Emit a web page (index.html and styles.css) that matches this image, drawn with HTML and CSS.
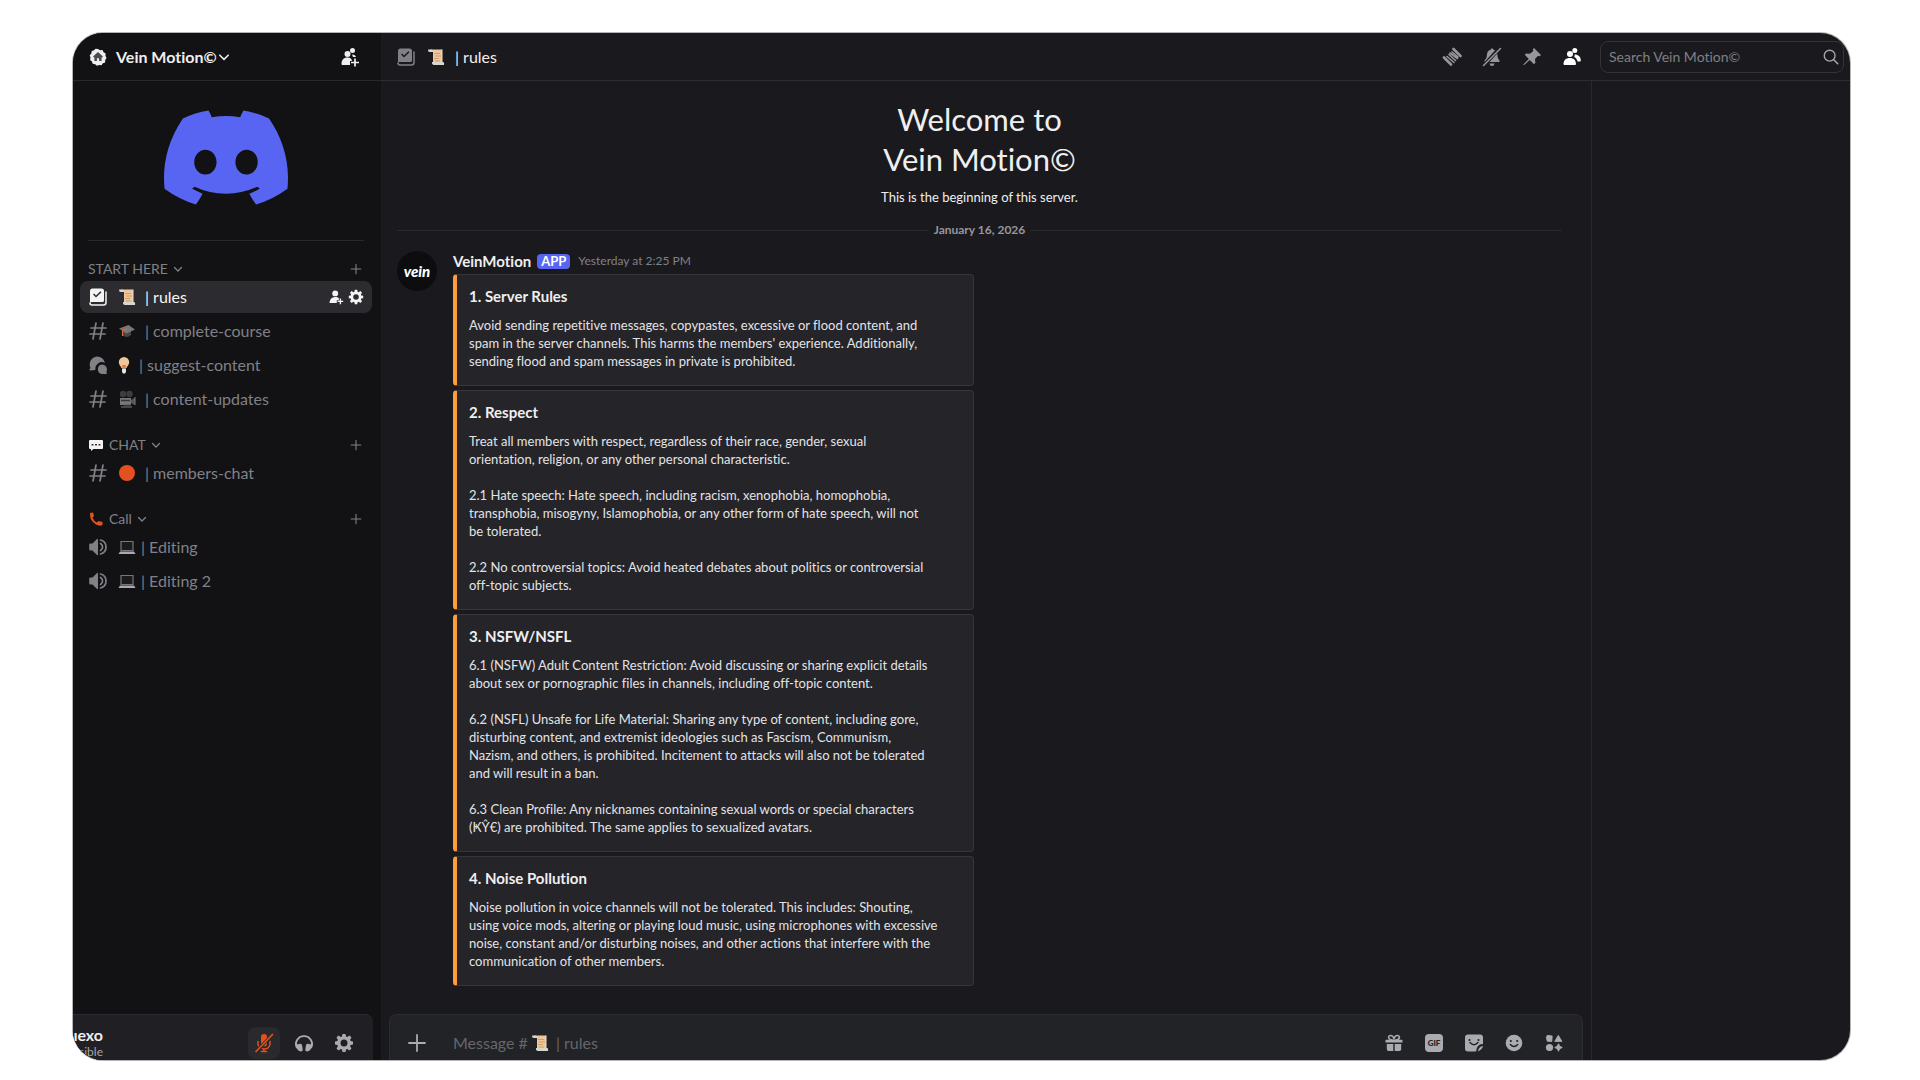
FILE: index.html
```html
<!DOCTYPE html>
<html lang="en">
<head>
<meta charset="utf-8">
<title>Vein Motion© | rules</title>
<link rel="stylesheet" href="styles.css">
</head>
<body>
<svg class="sprite" aria-hidden="true">
  <symbol id="hash" viewBox="0 0 20 20"><path d="M8 2 5 18M15 2l-3 16M3 7h15M2 13h15" fill="none" stroke="currentColor" stroke-width="1.7" stroke-linecap="round"/></symbol>
  <symbol id="chevron" viewBox="0 0 10 10"><path d="m1.500 3.500 3.500 3.500 3.500-3.500" fill="none" stroke="currentColor" stroke-width="1.300" stroke-linecap="round"/></symbol>
  <symbol id="plus" viewBox="0 0 20 20"><path d="M10 2v16M2 10h16" fill="none" stroke="currentColor" stroke-width="1.800" stroke-linecap="round"/></symbol>
  <symbol id="rulesicon" viewBox="0 0 20 20"><path fill="currentColor" fill-rule="evenodd" d="M4 1.500h9.500A2.500 2.500 0 0 1 16 4v9.500A1.500 1.500 0 0 1 14.500 15H4a2 2 0 0 0-2 .8V4a2.500 2.500 0 0 1 2-2.500ZM5 7.600l3 3 5.500-5.300-1.100-1.100L8 8.400 6.100 6.500Z"/><path fill="none" stroke="currentColor" stroke-width="1.500" stroke-linecap="round" d="M18 5v10.500a2.500 2.500 0 0 1-2.500 2.500H4a2 2 0 0 1-2-2"/></symbol>
  <symbol id="scroll" viewBox="0 0 18 18"><path fill="#edc69b" d="M3.500 1.500H15v12.500H6V4H3.500Z"/><path fill="#d9d5cf" d="M1 1.500h3.500q1.500 0 1.500 2.500H2.500Q1 4 1 1.500ZM5 14h11q1.500 0 1 3H6.500Q4.500 16.500 5 14Z"/><path stroke="#d29d68" stroke-width="1" d="M7 5.500h6M8 8h6M7 10.500h5M8 13h5"/><path d="M15 1.500V14" stroke="#e5ddd2"/></symbol>
  <symbol id="cap" viewBox="0 0 18 18"><path fill="#45464a" d="M4.500 8v5.500q4.500 3 8.500-.5V8Z"/><path fill="#77777b" d="M1 6.500 10.500 3 17 7.500 8.500 11.500Z"/><path d="m9 7-4.500 2v5" fill="none" stroke="#dd6838" stroke-width="1.200"/></symbol>
  <symbol id="threads" viewBox="0 0 20 20"><path fill="currentColor" d="M9 1.500a8 8 0 0 1 8 6.500A6.500 6.500 0 0 0 7.500 15L2 15.500q-1 0-.5-1l1-1.500A8 8 0 0 1 9 1.500Z"/><path fill="currentColor" d="M14 9.500a5 5 0 0 1 4.300 7.500l.7 1q.3 1-1 1H14a4.800 4.800 0 0 1 0-9.500Z"/></symbol>
  <symbol id="bulb" viewBox="0 0 12 18"><path fill="#edc69b" d="M6 1a5.200 5.200 0 0 1 5.200 5.200C11.200 9 9 10 8.500 12h-5C3 10 .8 9 .8 6.200A5.200 5.200 0 0 1 6 1Z"/><path fill="#ef7c2c" d="M4 9h4l-.5 3.500h-3Z"/><path fill="#e5e5e6" d="M4 12.500h4V16l-1 1.500H5L4 16Z"/></symbol>
  <symbol id="camera" viewBox="0 0 18 18"><circle cx="5" cy="4" r="3.200" fill="#3c3c42"/><circle cx="11.500" cy="4" r="3.200" fill="#3c3c42"/><path fill="#77767d" d="M2 8h11v7H2Z"/><path fill="#55545b" d="m13 10 4-2.500v7.500l-4-2Z"/><path stroke="#35353a" d="M3 10.500h9M6 15.500h7" stroke-width="1.500"/><path stroke="#77767d" d="M3 17h11M17 7v8"/></symbol>
  <symbol id="laptop" viewBox="0 0 18 18"><path fill="#1b1b1e" stroke="#77767c" stroke-width="1.200" d="M3 3.500h12v9H3Z"/><path fill="#aaa9b0" d="M2 13.500h14l1.500 2.500H.5Z"/></symbol>
  <symbol id="speaker" viewBox="0 0 20 20"><path fill="currentColor" d="M10 2.500v15q0 1-1 .5L4.500 13.500H2.500q-1.300 0-1.300-1.300V7.800q0-1.300 1.300-1.300h2L9 2q1-.5 1 .5Z"/><path d="M12.500 6.500a4 4 0 0 1 0 7M12.500 3a7.200 7.200 0 0 1 0 14" fill="none" stroke="currentColor" stroke-width="1.700" stroke-linecap="round"/></symbol>
  <symbol id="bubble" viewBox="0 0 16 16"><path fill="#f2f2f3" d="M2 3h12q1 0 1 1v7q0 1-1 1H5.500L3 14v-2H2q-1 0-1-1V4q0-1 1-1Z"/><path fill="#333" d="M3.500 7h2v1.500h-2Zm3.500 0h2v1.500H7Zm3.500 0h2v1.500h-2Z"/></symbol>
  <symbol id="phone" viewBox="0 0 16 16"><path fill="#e2511f" d="M2 2 5 1.500 6 5 4.500 6.500q1 3.500 4.500 5L10.500 10l4 1v3q-3 1.500-6.500-.5Q1.500 9.500 2 2Z"/></symbol>
  <symbol id="gear" viewBox="0 0 20 20"><path fill="currentColor" fill-rule="evenodd" d="M8.500 1h3l.5 2.400 1.300.6 2.200-1.400 2 2L16.100 6.800l.5 1.300L19 8.500v3l-2.400.4-.5 1.300 1.400 2.200-2 2-2.200-1.400-1.300.6-.5 2.400h-3L8 16.600 6.700 16l-2.200 1.400-2-2 1.400-2.200-.5-1.300L1 11.500v-3l2.400-.4.5-1.300-1.400-2.200 2-2L6.700 4 8 3.400ZM10 6.500a3.500 3.500 0 1 0 0 7 3.500 3.500 0 0 0 0-7Z"/></symbol>
  <symbol id="adduser" viewBox="0 0 20 20"><circle cx="9" cy="5.500" r="3.700" fill="currentColor"/><path fill="currentColor" d="M2 17.500c0-4 2.500-7.500 7-7.500 2 0 3.500.6 4.600 1.700V14H11v3.500Z"/><path d="M15.500 12v7M12 15.500h7" stroke="currentColor" stroke-width="1.700"/></symbol>
  <symbol id="invite" viewBox="0 0 20 20"><circle cx="7.500" cy="7" r="3" fill="currentColor"/><circle cx="12.500" cy="3.500" r="2.500" fill="currentColor"/><path fill="currentColor" d="M1.500 17c0-4 2-6.500 6-6.500 1.500 0 2.700.4 3.700 1.200L12 14h-2v4H2.500q-1 0-1-1ZM12 7.500c2 0 3.500.8 4 2.500h-3Z"/><path d="M15 11.500v8M11 15.500h8" stroke="currentColor" stroke-width="1.700"/></symbol>
  <symbol id="members" viewBox="0 0 20 20"><circle cx="8" cy="7" r="3" fill="currentColor"/><circle cx="12.800" cy="3.500" r="2.500" fill="currentColor"/><path fill="currentColor" d="M1.500 17c.2-4 2.500-6 6.300-6s6 2 6.200 6q0 1-1 1H2.500q-1 0-1-1ZM12.500 7.500c4 0 6.300 2.500 6.300 6q0 1-1 1h-2.200c-.4-2-1.500-3.600-3.400-4.600q.8-1.200.3-2.400Z"/></symbol>
  <symbol id="home" viewBox="0 0 20 20"><path fill="currentColor" d="m10 1 2.300 1.400 2.700-.2 1.200 2.400L18.500 6l-.2 2.700L19.500 11l-1.500 2.300-.1 2.700-2.500 1-1.500 2.200-2.600-.3-2.500.8-2-1.600-2.700-.5-.8-2.500L1.200 13.300 1.600 10.500.8 8l1.800-2L3 3.400l2.600-.8L7.300.9Z"/><path fill="#4b4b51" d="m10 4.500 5.500 5-1 1H14v4h-2.800v-3.200H8.800v3.200H6v-4h-.5l-1-1Z"/></symbol>
  <symbol id="thread" viewBox="0 0 20 20"><g fill="none" stroke="currentColor" stroke-linecap="round"><path d="m2 10.500 7 7M11.500 2l7 7" stroke-width="2.600"/><path d="m5 9.500 7 6M7 7.500l6.500 6M8 6l7.500 5.500M10 5l6 5" stroke-width="1.600"/></g></symbol>
  <symbol id="bell" viewBox="0 0 20 20"><path fill="currentColor" d="M10 1.500q1.300 0 1.500 1.200l1.700.6L3 14.500q-1 0-.5-1 2.500-2 2.500-6 0-3.500 3.500-4.800Q8.700 1.500 10 1.500ZM15.300 6.500q0 5 2.200 7 .5 1.500-.8 1.500H7.500ZM7.500 16.500h5q-.3 2.500-2.500 2.500t-2.500-2.500Z"/><path d="M18.500 1.500 1.500 18.500" stroke="currentColor" stroke-width="1.500" stroke-linecap="round"/></symbol>
  <symbol id="pin" viewBox="0 0 20 20"><path fill="currentColor" d="m12 1 7 7-1.300 1.200-1.700-.4-3 3.200.4 3.800-1.400 1.400-4.300-4.300L2.200 18H1.500v-.8l5.300-5.300-4-4.200L4 6.500l4 .3L11.300 4l-.5-1.800Z"/></symbol>
  <symbol id="search" viewBox="0 0 20 20"><circle cx="8.500" cy="8.500" r="6" fill="none" stroke="currentColor" stroke-width="1.500"/><path d="m13 13 4.500 4.500" stroke="currentColor" stroke-width="1.700" stroke-linecap="round"/></symbol>
  <symbol id="mute" viewBox="0 0 20 20"><path fill="currentColor" d="M10 1q3 0 3 3v1L7 11V4q0-3 3-3ZM13 9.500v1a3 3 0 0 1-3 3l-.8-.1Z"/><path fill="none" stroke="currentColor" stroke-width="1.500" stroke-linecap="round" d="M4 8.500V11q0 1 .4 1.800M16 8.500V11q-.6 5-6 5l-1.500-.2M10 16v2.500M7.500 18.500h5"/><path d="M18.500 1.500 2 18.500" stroke="currentColor" stroke-width="1.700" stroke-linecap="round"/></symbol>
  <symbol id="headset" viewBox="0 0 20 20"><path fill="none" stroke="currentColor" stroke-width="1.900" d="M3 15A8 8 0 1 1 17 15"/><path fill="currentColor" d="M5 11q2-1 3 1l.7 4.500q.3 2-1.700 2-4 0-5-6.500Q3 11 5 11ZM15 11q-2-1-3 1l-.7 4.500q-.3 2 1.700 2 4 0 5-6.500-1-1-3-1Z"/></symbol>
  <symbol id="gift" viewBox="0 0 20 20"><path fill="currentColor" d="M1.500 6.500h17q1 0 1 1v2H.5v-2q0-1 1-1ZM2 11h7.200v8H4q-2 0-2-2Zm8.800 0H18v6q0 2-2 2h-5.200Z"/><path fill="none" stroke="currentColor" stroke-width="1.800" d="M10 7C7 7 4 6 4 3.700 4 .8 9 .5 10 5.500 11 .5 16 .8 16 3.700 16 6 13 7 10 7Z"/></symbol>
  <symbol id="sticker" viewBox="0 0 20 20"><path fill="currentColor" d="M4 1.500h12q3 0 3 3V11q-6-.5-7 7.500H4q-3 0-3-3v-11q0-3 3-3ZM19 13q-.5 3-5 5.500.500-5 5-5.500Z"/><g fill="#222327"><circle cx="5.500" cy="7" r="1.100"/><circle cx="14.500" cy="7" r="1.100"/></g><path d="M6 9.500q4 4.500 8 0" fill="none" stroke="#222327" stroke-width="1.400" stroke-linecap="round"/></symbol>
  <symbol id="smile" viewBox="0 0 20 20"><circle cx="10" cy="10" r="8.300" fill="currentColor"/><g fill="#222327"><circle cx="6.800" cy="8" r="1.100"/><circle cx="13.200" cy="8" r="1.100"/></g><path d="M6.300 11.500q3.700 4 7.400 0" fill="none" stroke="#222327" stroke-width="1.400" stroke-linecap="round"/></symbol>
  <symbol id="apps" viewBox="0 0 20 20"><path fill="currentColor" stroke="currentColor" stroke-linejoin="round" d="m2.500 1.500 5.500.8-.5 6L2.500 8 1.500 4ZM14.800 1.500 18.800 8.200h-8ZM15 10.800l1.400 2.800 2.800 1.400-2.800 1.400-1.400 2.800-1.400-2.800-2.800-1.400 2.800-1.400Z"/><circle cx="5" cy="15" r="4" fill="currentColor"/></symbol>
</svg>

<div class="window">
  <aside class="sidebar">
    <header class="server">
      <svg class="i18"><use href="#home"/></svg>
      <button class="server-name" type="button">Vein Motion© <svg class="i12"><use href="#chevron"/></svg></button>
      <button class="icon-btn push" type="button" aria-label="Invite"><svg class="i20"><use href="#invite"/></svg></button>
    </header>
    <div class="banner">
      <svg class="logo" viewBox="0 0 127.14 96.36" role="img" aria-label="Discord"><path fill="#5865f2" d="M107.7,8.07A105.15,105.15,0,0,0,81.47,0a72.06,72.06,0,0,0-3.36,6.83A97.68,97.68,0,0,0,49,6.83,72.37,72.37,0,0,0,45.64,0,105.89,105.89,0,0,0,19.39,8.09C2.79,32.65-1.71,56.6.54,80.21h0A105.73,105.73,0,0,0,32.71,96.36,77.7,77.7,0,0,0,39.6,85.25a68.42,68.42,0,0,1-10.85-5.18c.91-.66,1.8-1.34,2.66-2a75.57,75.57,0,0,0,64.32,0c.87.71,1.76,1.39,2.66,2a68.68,68.68,0,0,1-10.87,5.19,77,77,0,0,0,6.89,11.1A105.25,105.25,0,0,0,126.6,80.22h0C129.24,52.84,122.09,29.11,107.7,8.07ZM42.45,65.69C36.18,65.69,31,60,31,53s5-12.74,11.43-12.74S54,46,53.89,53,48.84,65.69,42.45,65.69Zm42.24,0C78.41,65.69,73.25,60,73.25,53s5-12.74,11.44-12.74S96.23,46,96.12,53,91.08,65.69,84.69,65.69Z"/></svg>
    </div>
    <nav class="channels">
      <section class="group">
        <h2 class="group-head"><span>START HERE</span><svg class="i10"><use href="#chevron"/></svg><button class="icon-btn push" type="button" aria-label="Create channel"><svg class="i12"><use href="#plus"/></svg></button></h2>
        <a class="channel active" href="#rules"><svg class="i20"><use href="#rulesicon"/></svg><svg class="i18"><use href="#scroll"/></svg><span>| rules</span><svg class="i16 push"><use href="#adduser"/></svg><svg class="i16 last"><use href="#gear"/></svg></a>
        <a class="channel" href="#course"><svg class="i20"><use href="#hash"/></svg><svg class="i18"><use href="#cap"/></svg><span>| complete-course</span></a>
        <a class="channel" href="#suggest"><svg class="i20"><use href="#threads"/></svg><svg class="bulb"><use href="#bulb"/></svg><span>| suggest-content</span></a>
        <a class="channel" href="#updates"><svg class="i20"><use href="#hash"/></svg><svg class="i18"><use href="#camera"/></svg><span>| content-updates</span></a>
      </section>
      <section class="group">
        <h2 class="group-head"><svg class="i16"><use href="#bubble"/></svg><span>CHAT</span><svg class="i10"><use href="#chevron"/></svg><button class="icon-btn push" type="button" aria-label="Create channel"><svg class="i12"><use href="#plus"/></svg></button></h2>
        <a class="channel" href="#members-chat"><svg class="i20"><use href="#hash"/></svg><span class="dot"></span><span>| members-chat</span></a>
      </section>
      <section class="group">
        <h2 class="group-head"><svg class="i16"><use href="#phone"/></svg><span>Call</span><svg class="i10"><use href="#chevron"/></svg><button class="icon-btn push" type="button" aria-label="Create channel"><svg class="i12"><use href="#plus"/></svg></button></h2>
        <a class="channel voice" href="#editing"><svg class="i20"><use href="#speaker"/></svg><svg class="i18"><use href="#laptop"/></svg><span>| Editing</span></a>
        <a class="channel voice" href="#editing-2"><svg class="i20"><use href="#speaker"/></svg><svg class="i18"><use href="#laptop"/></svg><span>| Editing 2</span></a>
      </section>
    </nav>
    <footer class="user">
      <div class="user-id"><strong>uexo</strong><span>sible</span></div>
      <button class="tool muted-mic" type="button" aria-label="Unmute"><svg class="i20"><use href="#mute"/></svg></button>
      <button class="tool" type="button" aria-label="Deafen"><svg class="i20"><use href="#headset"/></svg></button>
      <button class="tool" type="button" aria-label="User settings"><svg class="i20"><use href="#gear"/></svg></button>
    </footer>
  </aside>

  <div class="main">
    <header class="topbar">
      <svg class="i20"><use href="#rulesicon"/></svg>
      <svg class="i18"><use href="#scroll"/></svg>
      <h1 class="title">| rules</h1>
      <div class="top-tools">
        <button class="icon-btn" type="button" aria-label="Threads"><svg class="i20"><use href="#thread"/></svg></button>
        <button class="icon-btn" type="button" aria-label="Notifications"><svg class="i20"><use href="#bell"/></svg></button>
        <button class="icon-btn" type="button" aria-label="Pinned messages"><svg class="i20"><use href="#pin"/></svg></button>
        <button class="icon-btn on" type="button" aria-label="Member list"><svg class="i20"><use href="#members"/></svg></button>
      </div>
      <div class="search"><input type="text" aria-label="Search" placeholder="Search Vein Motion©"><svg class="i18"><use href="#search"/></svg></div>
    </header>
    <div class="body">
      <main class="chat">
        <div class="log">
          <div class="welcome">
            <h2>Welcome to<br>Vein Motion©</h2>
            <p>This is the beginning of this server.</p>
          </div>
          <div class="date">January 16, 2026</div>
          <article class="message">
            <div class="avatar">vein</div>
            <div class="content">
              <div class="meta"><strong>VeinMotion</strong><span class="badge">APP</span><time>Yesterday at 2:25 PM</time></div>
              <section class="embed">
                <h3>1. Server Rules</h3>
                <p>Avoid sending repetitive messages, copypastes, excessive or flood content, and<br>spam in the server channels. This harms the members' experience. Additionally,<br>sending flood and spam messages in private is prohibited.</p>
              </section>
              <section class="embed">
                <h3>2. Respect</h3>
                <p>Treat all members with respect, regardless of their race, gender, sexual<br>orientation, religion, or any other personal characteristic.</p>
                <p>2.1 Hate speech: Hate speech, including racism, xenophobia, homophobia,<br>transphobia, misogyny, Islamophobia, or any other form of hate speech, will not<br>be tolerated.</p>
                <p>2.2 No controversial topics: Avoid heated debates about politics or controversial<br>off-topic subjects.</p>
              </section>
              <section class="embed">
                <h3>3. NSFW/NSFL</h3>
                <p>6.1 (NSFW) Adult Content Restriction: Avoid discussing or sharing explicit details<br>about sex or pornographic files in channels, including off-topic content.</p>
                <p>6.2 (NSFL) Unsafe for Life Material: Sharing any type of content, including gore,<br>disturbing content, and extremist ideologies such as Fascism, Communism,<br>Nazism, and others, is prohibited. Incitement to attacks will also not be tolerated<br>and will result in a ban.</p>
                <p>6.3 Clean Profile: Any nicknames containing sexual words or special characters<br>(ҜŶ€) are prohibited. The same applies to sexualized avatars.</p>
              </section>
              <section class="embed">
                <h3>4. Noise Pollution</h3>
                <p>Noise pollution in voice channels will not be tolerated. This includes: Shouting,<br>using voice mods, altering or playing loud music, using microphones with excessive<br>noise, constant and/or disturbing noises, and other actions that interfere with the<br>communication of other members.</p>
              </section>
            </div>
          </article>
        </div>
        <form class="compose">
          <button class="icon-btn attach" type="button" aria-label="Attach"><svg class="i20"><use href="#plus"/></svg></button>
          <label for="msg">Message # <svg class="i18"><use href="#scroll"/></svg><span>| rules</span></label>
          <input id="msg" type="text">
          <div class="compose-tools">
            <button class="icon-btn" type="button" aria-label="Gift"><svg class="i18"><use href="#gift"/></svg></button>
            <button class="icon-btn" type="button"><span class="gif">GIF</span></button>
            <button class="icon-btn" type="button" aria-label="Stickers"><svg class="i20"><use href="#sticker"/></svg></button>
            <button class="icon-btn" type="button" aria-label="Emoji"><svg class="i20"><use href="#smile"/></svg></button>
            <button class="icon-btn" type="button" aria-label="Apps"><svg class="i18"><use href="#apps"/></svg></button>
          </div>
        </form>
      </main>
      <aside class="member-list" aria-label="Members"></aside>
    </div>
  </div>
</div>
</body>
</html>
```
FILE: styles.css
```css
* { box-sizing: border-box; }

body {
  margin: 0;
  padding: 33px 70px 20px 73px;
  height: 100vh;
  background: #fff;
  color: #efeff0;
  font: 16px/20px Lato, "Noto Sans", sans-serif;
  font-variant-ligatures: no-common-ligatures;
}

h1, h2, h3, p { margin: 0; font-weight: 400; }
button { border: 0; padding: 0; background: none; color: inherit; font: inherit; }
input { border: 0; padding: 0; background: none; color: inherit; font: inherit; min-width: 0; outline: 0; }
a { color: inherit; text-decoration: none; }
svg { flex: none; display: block; }

.sprite { position: absolute; width: 0; height: 0; }
.i10 { width: 10px; height: 10px; }
.i12 { width: 12px; height: 12px; }
.i16 { width: 16px; height: 16px; }
.i18 { width: 18px; height: 18px; }
.i20 { width: 20px; height: 20px; }
.icon-btn { display: flex; align-items: center; }
.push { margin-left: auto; }

.window {
  display: grid;
  grid-template-columns: 308px minmax(0, 1fr);
  height: 100%;
  overflow: hidden;
  border-radius: 30px;
  background: #1a1a1e;
  box-shadow: 0 0 0 1px #b4b4b4;
}

/* Sidebar */
.sidebar { display: flex; flex-direction: column; min-height: 0; background: #121214; }
.server {
  display: flex;
  align-items: center;
  flex: none;
  height: 48px;
  padding: 0 21px 0 16px;
  border-bottom: 1px solid #29292d;
}
.server-name { display: flex; align-items: center; gap: 1px; margin-left: 9px; font-weight: 700; }
.banner {
  display: flex;
  justify-content: center;
  margin: 0 17px 0 15px;
  padding: 29px 0 35px;
  border-bottom: 1px solid #29292d;
}
.logo { width: 124px; height: 95px; }
.channels { flex: 1; min-height: 0; padding: 18px 9px 0 7px; color: #808087; }
.group { margin-bottom: 20px; }
.group-head {
  display: flex;
  align-items: center;
  gap: 5px;
  height: 20px;
  margin-bottom: 2px;
  padding: 0 10px 0 8px;
  font-size: 14px;
  line-height: 20px;
}
.channel {
  display: flex;
  align-items: center;
  height: 32px;
  margin-bottom: 2px;
  padding: 0 8px;
  border-radius: 8px;
}
.channel svg:nth-child(2) { margin: 0 9px 0 10px; }
.channel.voice svg:nth-child(2) { margin-right: 5px; }
.channel.active { background: #2c2c30; color: #f4f4f5; }
.channel .last { margin-left: 4px; }
.bulb { width: 12px; height: 18px; }
.dot { width: 16px; height: 16px; margin: 0 10px 0 11px; border-radius: 50%; background: #e2511f; }

.user {
  display: flex;
  flex: none;
  align-items: center;
  gap: 8px;
  height: 46px;
  margin-right: 8px;
  padding: 10px 13px 0 0;
  border-top: 1px solid #2a2a2f;
  border-radius: 0 8px 0 0;
  background: #202024;
}
.user-id {
  display: flex;
  flex-direction: column;
  align-items: flex-end;
  width: 30px;
  margin-right: auto;
  line-height: 17px;
}
.user-id span { color: #a5a5ab; font-size: 12px; }
.tool {
  display: grid;
  place-items: center;
  width: 32px;
  height: 32px;
  border-radius: 8px;
  color: #aaaab1;
}
.muted-mic { background: #2a2a2d; color: #e2511f; }

/* Main column */
.main { display: flex; flex-direction: column; min-width: 0; min-height: 0; }
.topbar {
  display: flex;
  align-items: center;
  flex: none;
  height: 48px;
  padding: 0 6px 0 15px;
  border-bottom: 1px solid #2e2e32;
  color: #808087;
}
.topbar > .i18 { margin: 0 10px 0 11px; }
.title { color: #efeff0; font-size: 16px; }
.top-tools { display: flex; gap: 20px; margin: 0 18px 0 auto; color: #96969c; }
.top-tools .on { color: #fff; }
.search {
  display: flex;
  align-items: center;
  width: 244px;
  height: 32px;
  padding: 0 3px 0 8px;
  border: 1px solid #333338;
  border-radius: 8px;
  color: #a5a5ab;
}
.search input { flex: 1; font-size: 14px; }
.search input::placeholder { color: #808087; opacity: 1; }

.body { display: grid; grid-template-columns: minmax(0, 1fr) 259px; flex: 1; min-height: 0; }
.member-list { border-left: 1px solid #29292d; }
.chat { display: flex; flex-direction: column; min-width: 0; min-height: 0; }
.log { flex: 1; min-height: 0; overflow: hidden; padding: 18px 29px 0 16px; }

.welcome { text-align: center; }
.welcome h2 { font-size: 31px; line-height: 40px; }
.welcome p { margin-top: 8px; font-size: 13px; line-height: 20px; }
.date {
  display: flex;
  align-items: center;
  gap: 5px;
  margin-top: 14px;
  color: #96969c;
  font-size: 12px;
  font-weight: 700;
  line-height: 18px;
}
.date::before, .date::after { content: ""; flex: 1; height: 1px; background: #29292d; }

.message { display: flex; gap: 16px; margin-top: 12px; }
.avatar {
  display: grid;
  flex: none;
  place-items: center;
  width: 40px;
  height: 40px;
  border-radius: 50%;
  background: #0d0d10;
  color: #fff;
  font-size: 15px;
  font-style: italic;
  font-weight: 900;
}
.content { flex: 1; min-width: 0; }
.meta { display: flex; align-items: center; gap: 4px; height: 23px; padding-bottom: 3px; }
.meta strong { font-size: 15px; }
.badge {
  margin-left: 2px;
  padding: 0 4px;
  border-radius: 4px;
  background: #5865f2;
  color: #fff;
  font-size: 13px;
  font-weight: 700;
  line-height: 15px;
}
.meta time { margin-left: 4px; color: #808087; font-size: 12px; }
.embed {
  max-width: 521px;
  margin-bottom: 4px;
  padding: 10px 12px 15px;
  border: 1px solid #36363b;
  border-left: 4px solid #ff9c3c;
  border-radius: 4px;
  background: #242429;
}
.embed h3 { margin-bottom: 9px; font-size: 15px; font-weight: 700; line-height: 22px; }
.embed p { color: #e3e3e6; font-size: 13px; line-height: 18px; white-space: nowrap; }
.embed p + p { margin-top: 18px; }

.compose {
  display: flex;
  align-items: center;
  flex: none;
  height: 46px;
  margin: 0 8px;
  padding: 10px 18px 0 17px;
  border: 1px solid #2b2b30;
  border-bottom: 0;
  border-radius: 8px 8px 0 0;
  background: #222327;
  color: #aaaab1;
}
.compose label { display: flex; align-items: center; gap: 3px; margin-left: 26px; color: #66666d; }
.compose label span { margin-left: 4px; }
.compose input { flex: 1; }
.compose-tools { display: flex; gap: 20px; }
.compose-tools .icon-btn { justify-content: center; width: 20px; }
.gif {
  width: 18px;
  height: 18px;
  border-radius: 4px;
  background: #aaaab1;
  color: #222327;
  font-size: 8px;
  font-weight: 900;
  line-height: 18px;
  text-align: center;
}
```
